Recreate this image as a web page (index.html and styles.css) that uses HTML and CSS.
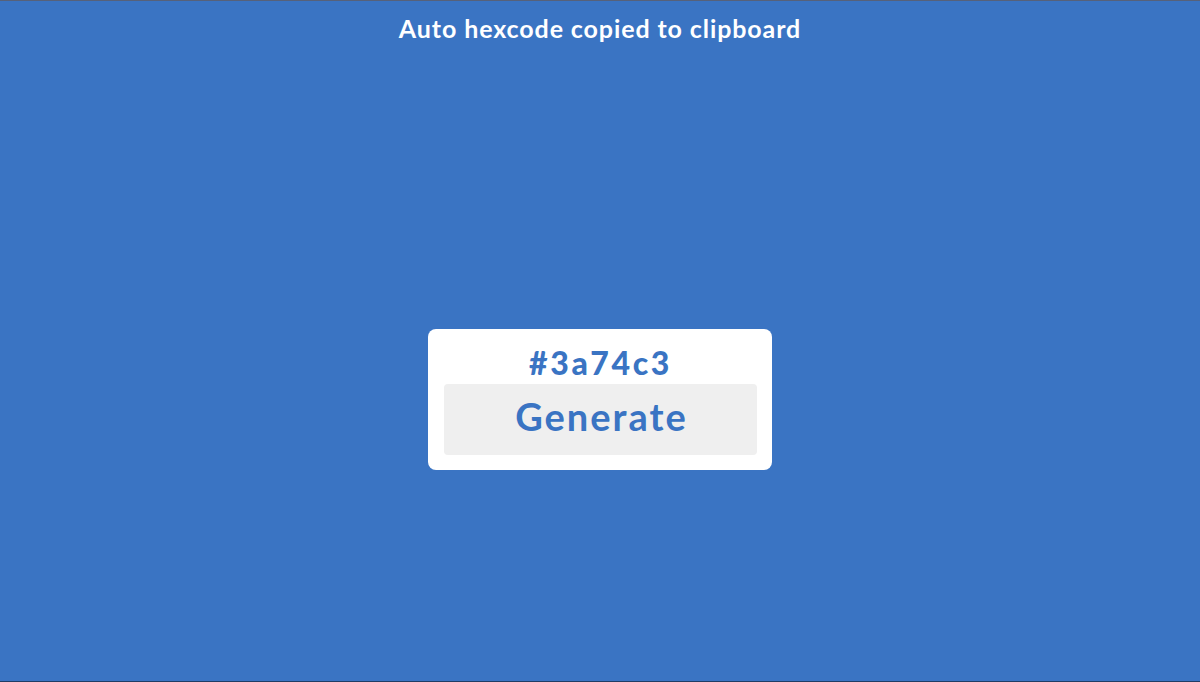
FILE: index.html
```html
<!DOCTYPE html>
<html lang="en">
<head>
<meta charset="utf-8">
<title>Hexcode Generator</title>
<link rel="stylesheet" href="styles.css">
</head>
<body>
<div class="page">
  <h1 class="notice">Auto hexcode copied to clipboard</h1>
  <main class="stage">
    <div class="card">
      <div class="hex">#3a74c3</div>
      <button class="generate" type="button">Generate</button>
    </div>
  </main>
</div>
</body>
</html>
```
FILE: styles.css
```css
html, body {
  margin: 0;
  padding: 0;
  height: 100%;
}
body {
  background: #3a74c3;
  font-family: "Lato", "Open Sans", sans-serif;
}
.page {
  box-sizing: border-box;
  height: 682px;
  border-top: 1px solid #56617a;
  border-bottom: 1px solid #1f3d66;
  display: flex;
  flex-direction: column;
}
.notice {
  margin: 0;
  padding-top: 12px;
  height: 30px;
  text-align: center;
  color: #ffffff;
  font-size: 25px;
  font-weight: 700;
  letter-spacing: 0.9px;
  line-height: 30px;
}
.stage {
  flex: 1;
  display: flex;
  justify-content: center;
  padding-top: 286px;
  align-items: flex-start;
}
.card {
  width: 344px;
  box-sizing: border-box;
  background: #ffffff;
  border-radius: 8px;
  padding: 14px 15px 15px 16px;
  display: flex;
  flex-direction: column;
  align-items: stretch;
}
.hex {
  text-align: center;
  color: #3a74c3;
  font-size: 32px;
  font-weight: 900;
  letter-spacing: 2.6px;
  line-height: 40px;
  height: 41px;
}
.generate {
  height: 71px;
  border: none;
  border-radius: 4px;
  background: #efefef;
  color: #3a74c3;
  font-family: "Lato", "Open Sans", sans-serif;
  font-size: 38px;
  font-weight: 700;
  letter-spacing: 2px;
  padding: 0 0 8px 2px;
}
```
